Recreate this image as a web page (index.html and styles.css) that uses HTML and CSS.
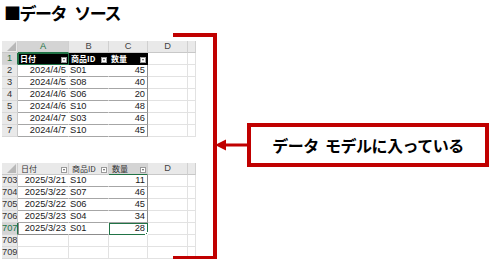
FILE: index.html
```html
<!DOCTYPE html>
<html lang="ja">
<head>
<meta charset="utf-8">
<link rel="stylesheet" href="styles.css">
</head>
<body>
<div class="title">■データ ソース</div>
<div class="stage">
  <div class="sheets">
    <div class="sheet">
      <div class="c ch corner"></div>
      <div class="c ch csel">A</div>
      <div class="c ch">B</div>
      <div class="c ch">C</div>
      <div class="c ch">D</div>
      <div class="c ch"></div>

      <div class="c rh rsel">1</div>
      <div class="c th a1">日付<i class="fb"></i></div>
      <div class="c th">商品ID<i class="fb"></i></div>
      <div class="c th">数量<i class="fb"></i></div>
      <div class="c"></div><div class="c"></div>

      <div class="c rh">2</div><div class="c td r">2024/4/5</div><div class="c td">S01</div><div class="c td r last">45</div><div class="c"></div><div class="c"></div>
      <div class="c rh">3</div><div class="c td r">2024/4/5</div><div class="c td">S08</div><div class="c td r last">40</div><div class="c"></div><div class="c"></div>
      <div class="c rh">4</div><div class="c td r">2024/4/6</div><div class="c td">S06</div><div class="c td r last">20</div><div class="c"></div><div class="c"></div>
      <div class="c rh">5</div><div class="c td r">2024/4/6</div><div class="c td">S10</div><div class="c td r last">48</div><div class="c"></div><div class="c"></div>
      <div class="c rh">6</div><div class="c td r">2024/4/7</div><div class="c td">S03</div><div class="c td r last">46</div><div class="c"></div><div class="c"></div>
      <div class="c rh">7</div><div class="c td r">2024/4/7</div><div class="c td">S10</div><div class="c td r last">45</div><div class="c"></div><div class="c"></div>
    </div>

    <div class="sheet">
      <div class="c ch corner"></div>
      <div class="c ch hd">日付<i class="fb"></i></div>
      <div class="c ch hd">商品ID<i class="fb"></i></div>
      <div class="c ch hd csel">数量<i class="fb"></i></div>
      <div class="c ch">D</div>
      <div class="c ch"></div>

      <div class="c rh">703</div><div class="c td r">2025/3/21</div><div class="c td">S10</div><div class="c td r last">11</div><div class="c"></div><div class="c"></div>
      <div class="c rh">704</div><div class="c td r">2025/3/22</div><div class="c td">S07</div><div class="c td r last">46</div><div class="c"></div><div class="c"></div>
      <div class="c rh">705</div><div class="c td r">2025/3/22</div><div class="c td">S06</div><div class="c td r last">45</div><div class="c"></div><div class="c"></div>
      <div class="c rh">706</div><div class="c td r">2025/3/23</div><div class="c td">S04</div><div class="c td r last">34</div><div class="c"></div><div class="c"></div>
      <div class="c rh rsel">707</div><div class="c td r endrow first">2025/3/23</div><div class="c td endrow">S01</div><div class="c td r last endrow cursel">28<i class="fh"></i></div><div class="c"></div><div class="c"></div>
      <div class="c rh">708</div><div class="c"></div><div class="c"></div><div class="c"></div><div class="c"></div><div class="c"></div>
      <div class="c rh">709</div><div class="c"></div><div class="c"></div><div class="c"></div><div class="c"></div><div class="c"></div>
    </div>
  </div>

  <div class="bracket"></div>

  <div class="callout">
    <svg class="arrow" width="32" height="12" viewBox="0 0 32 12">
      <polygon points="0,6 11,0.5 11,11.5" fill="#c00000"/>
      <rect x="10" y="4.5" width="22" height="3" fill="#c00000"/>
    </svg>
    <div class="box">データ&nbsp;&nbsp;モデルに入っている</div>
  </div>
</div>
</body>
</html>
```

FILE: styles.css
```css
* { box-sizing: border-box; }

body {
  margin: 0;
  background: #ffffff;
  font-family: "Liberation Sans", "Noto Sans CJK JP", sans-serif;
  color: #000;
}

.title {
  height: 33px;
  padding: 2px 0 0 4px;
  font-family: "Noto Sans CJK JP", sans-serif;
  font-weight: 700;
  font-size: 17px;
  line-height: 22px;
  letter-spacing: -1.5px;
  word-spacing: 6px;
}

.stage {
  position: relative;
  display: flex;
  align-items: flex-start;
}

.sheets {
  margin-left: 2px;
  padding-top: 8px;
  display: flex;
  flex-direction: column;
  gap: 26px;
}

.sheet {
  display: grid;
  grid-template-columns: 16px 51px 40px 39px 40px 8px;
  grid-auto-rows: 12px;
  font-size: 9.3px;
  line-height: 11px;
  color: #1a1a1a;
}

.c {
  position: relative;
  border-right: 1px solid #e2e2e2;
  border-bottom: 1px solid #e2e2e2;
  white-space: nowrap;
  overflow: hidden;
  padding: 0 1px;
}

.ch {
  background: #e9e9e9;
  border-right: 1px solid #d0d0d0;
  border-bottom: 1px solid #c8c8c8;
  text-align: center;
  color: #444;
}

.ch.hd {
  text-align: left;
  padding-left: 3px;
  font-family: "Noto Sans CJK JP", sans-serif;
  font-size: 8px;
  color: #333;
}

.corner {
  background: #e9e9e9;
}
.corner::after {
  content: "";
  position: absolute;
  right: 1px;
  bottom: 1px;
  width: 0;
  height: 0;
  border-left: 9px solid transparent;
  border-bottom: 9px solid #b8b8b8;
}

.csel {
  background: #d4d4d4;
  color: #217346;
  border-bottom: 1px solid #217346;
}

.rh {
  background: #e9e9e9;
  border-right: 1px solid #c8c8c8;
  border-bottom: 1px solid #d8d8d8;
  text-align: center;
  color: #333;
  padding: 0;
}

.rsel {
  background: #d4d4d4;
  color: #217346;
  border-right: 1px solid #217346;
}

.th {
  background: #000;
  color: #fff;
  font-weight: 700;
  font-family: "Noto Sans CJK JP", sans-serif;
  font-size: 8px;
  padding-left: 2px;
  border-right: 1px solid #000;
  border-bottom: 1px solid #000;
}

.a1 {
  outline: 1px solid #217346;
  outline-offset: -1px;
}

.fb {
  position: absolute;
  right: 1px;
  bottom: 1px;
  width: 6px;
  height: 6px;
  background: #fff;
  border: 1px solid #9a9a9a;
}
.fb::after {
  content: "";
  position: absolute;
  left: 1px;
  top: 1px;
  border-left: 1.5px solid transparent;
  border-right: 1.5px solid transparent;
  border-top: 2px solid #555;
}

.td {
  border-bottom: 1px solid #a6a6a6;
  border-right: 1px solid transparent;
}
.td.r {
  text-align: right;
  padding-right: 2px;
}
.td.last {
  border-right: 1px solid #8c8c8c;
}

.endrow {
  border-bottom: 1px solid #8c8c8c;
}
.first {
  border-left: 1px solid #8c8c8c;
}

.cursel {
  outline: 1px solid #217346;
  outline-offset: -1px;
  overflow: visible;
}
.fh {
  position: absolute;
  right: -1px;
  bottom: -1px;
  width: 3px;
  height: 3px;
  background: #217346;
  border: 1px solid #fff;
}

.bracket {
  position: absolute;
  left: 173px;
  top: 0;
  width: 44px;
  height: 227px;
  border-top: 4px solid #c00000;
  border-right: 4px solid #c00000;
  border-bottom: 4px solid #c00000;
}

.callout {
  margin-left: 19px;
  margin-top: 90px;
  display: flex;
  align-items: center;
}

.arrow {
  display: block;
}

.box {
  width: 242px;
  height: 44px;
  border: 4px solid #c00000;
  display: flex;
  align-items: center;
  justify-content: center;
  font-family: "Noto Sans CJK JP", sans-serif;
  font-weight: 700;
  font-size: 16px;
  letter-spacing: -0.5px;
  color: #000;
}
```
